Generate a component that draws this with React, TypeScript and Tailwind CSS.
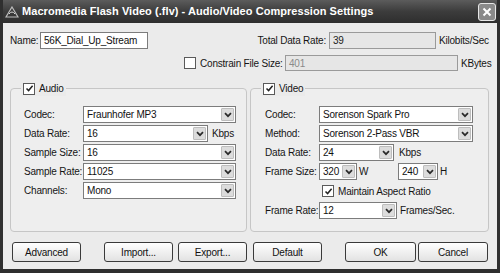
import React from "react";

const font = { fontFamily: '"Liberation Sans", Arial, sans-serif' };

function Chevron() {
  return (
    <svg width="8" height="6" viewBox="0 0 8 6">
      <path d="M1 1.2 L4 4.2 L7 1.2" fill="none" stroke="#2a2a2a" strokeWidth="1.7" />
    </svg>
  );
}

function Check() {
  return (
    <svg width="9" height="9" viewBox="0 0 9 9">
      <path d="M1.5 4.5 L3.6 6.6 L7.6 1.8" fill="none" stroke="#222" strokeWidth="1.5" />
    </svg>
  );
}

function CheckBox({ checked }: { checked: boolean }) {
  return (
    <span className="flex h-[12px] w-[12px] shrink-0 items-center justify-center border border-[#5a5a5a] bg-white">
      {checked ? <Check /> : null}
    </span>
  );
}

function Select({ value, className }: { value: string; className: string }) {
  return (
    <div className={"flex h-[17px] shrink-0 items-center border border-[#7c7c7c] bg-white pl-[3px] pr-[1px] " + className}>
      <span className="flex-1 truncate leading-none text-[#111]">{value}</span>
      <span className="flex h-[13px] w-[13px] items-center justify-center rounded-[1px] border border-[#bdbdbd] bg-[#dcdcdc]">
        <Chevron />
      </span>
    </div>
  );
}

function Btn({ label, className }: { label: string; className: string }) {
  return (
    <div
      className={
        "flex h-[20px] shrink-0 items-center justify-center rounded-[3px] border border-[#3a3a3a] bg-gradient-to-b from-white to-[#e2e2e2] text-[#111] " +
        className
      }
    >
      {label}
    </div>
  );
}

function Row({ label, labelW, children }: { label: string; labelW: string; children: React.ReactNode }) {
  return (
    <div className="flex h-[17px] items-center">
      <span className={"shrink-0 " + labelW}>{label}</span>
      {children}
    </div>
  );
}

export default function App() {
  return (
    <div
      className="flex h-[273px] w-[500px] flex-col border-x-[3px] border-b-[4px] border-[#2f2f2f] bg-[#2f2f2f] text-[10px] tracking-[-0.2px] text-[#151515]"
      style={font}
    >
      {/* Title bar */}
      <div className="relative flex h-[23px] shrink-0 items-center bg-gradient-to-b from-[#5c5c5c] via-[#3c3c3c] to-[#2e2e2e] pl-[2px]">
        <svg width="14" height="12" viewBox="0 0 14 12" className="mr-[3px]">
          <path d="M7 1 L13 11 L1 11 Z" fill="none" stroke="#bdbdbd" strokeWidth="1.2" />
          <path d="M4 8 Q7 4 10 8" fill="none" stroke="#d8d8d8" strokeWidth="1" />
        </svg>
        <span className="text-[11px] font-bold tracking-[0.05px] text-white">
          Macromedia Flash Video (.flv) - Audio/Video Compression Settings
        </span>
        <div className="absolute right-[1px] top-[3px] flex h-[18px] w-[18px] items-center justify-center rounded-[3px] border border-[#e6e6e6] bg-[#8a8a8a]">
          <svg width="10" height="10" viewBox="0 0 10 10">
            <path d="M1.5 1.5 L8.5 8.5 M8.5 1.5 L1.5 8.5" stroke="white" strokeWidth="2" />
          </svg>
        </div>
      </div>

      {/* Body */}
      <div className="flex flex-1 flex-col bg-[#ebebeb] pt-[9px]">
        {/* Row 1 */}
        <div className="flex h-[17px] items-center">
          <span className="ml-[7px] w-[30px] shrink-0">Name:</span>
          <div className="flex h-[17px] w-[108px] shrink-0 items-center border border-[#7c7c7c] bg-white pl-[3px] text-[#111]">
            56K_Dial_Up_Stream
          </div>
          <span className="w-[181px] shrink-0 pr-[3px] text-right">Total Data Rate:</span>
          <div className="flex h-[17px] w-[107px] shrink-0 items-center border border-[#9a9a9a] bg-[#e6e6e6] pl-[3px] text-[#222]">
            39
          </div>
          <span className="ml-[3px]">Kilobits/Sec</span>
        </div>

        {/* Row 2 */}
        <div className="mt-[6px] flex h-[16px] items-center">
          <span className="ml-[181px]">
            <CheckBox checked={false} />
          </span>
          <span className="ml-[4px] w-[85px] shrink-0">Constrain File Size:</span>
          <div className="flex h-[16px] w-[173px] shrink-0 items-center border border-[#9a9a9a] bg-[#e6e6e6] pl-[3px] text-[#8a8a8a]">
            401
          </div>
          <span className="ml-[3px]">KBytes</span>
        </div>

        {/* Groups */}
        <div className="mt-[17px] flex h-[144px] shrink-0">
          {/* Audio */}
          <div className="relative ml-[7px] flex w-[237px] flex-col gap-[2px] rounded-[4px] border border-[#c6c6c6] bg-[#eeeeee] pl-[13px] pt-[17px]">
            <div className="absolute left-[10px] top-[-8px] flex items-center gap-[4px] bg-[#ebebeb] px-[2px]">
              <CheckBox checked={true} />
              <span>Audio</span>
            </div>
            <Row label="Codec:" labelW="w-[59px]">
              <Select value="Fraunhofer MP3" className="w-[153px]" />
            </Row>
            <Row label="Data Rate:" labelW="w-[59px]">
              <Select value="16" className="w-[125px]" />
              <span className="ml-[4px]">Kbps</span>
            </Row>
            <Row label="Sample Size:" labelW="w-[59px]">
              <Select value="16" className="w-[153px]" />
            </Row>
            <Row label="Sample Rate:" labelW="w-[59px]">
              <Select value="11025" className="w-[153px]" />
            </Row>
            <Row label="Channels:" labelW="w-[59px]">
              <Select value="Mono" className="w-[153px]" />
            </Row>
          </div>

          {/* Video */}
          <div className="relative ml-[3px] flex w-[239px] flex-col gap-[2px] rounded-[4px] border border-[#c6c6c6] bg-[#eeeeee] pl-[14px] pt-[17px]">
            <div className="absolute left-[10px] top-[-8px] flex items-center gap-[4px] bg-[#ebebeb] px-[2px]">
              <CheckBox checked={true} />
              <span>Video</span>
            </div>
            <Row label="Codec:" labelW="w-[54px]">
              <Select value="Sorenson Spark Pro" className="w-[154px]" />
            </Row>
            <Row label="Method:" labelW="w-[54px]">
              <Select value="Sorenson 2-Pass VBR" className="w-[154px]" />
            </Row>
            <Row label="Data Rate:" labelW="w-[54px]">
              <Select value="24" className="w-[75px]" />
              <span className="ml-[5px]">Kbps</span>
            </Row>
            <Row label="Frame Size:" labelW="w-[54px]">
              <Select value="320" className="w-[38px]" />
              <span className="ml-[2px] w-[39px]">W</span>
              <Select value="240" className="w-[40px]" />
              <span className="ml-[2px]">H</span>
            </Row>
            <div className="flex h-[18px] items-center pl-[57px]">
              <CheckBox checked={true} />
              <span className="ml-[4px]">Maintain Aspect Ratio</span>
            </div>
            <Row label="Frame Rate:" labelW="w-[54px]">
              <Select value="12" className="w-[78px]" />
              <span className="ml-[3px]">Frames/Sec.</span>
            </Row>
          </div>
        </div>

        {/* Buttons */}
        <div className="mt-[10px] flex">
          <Btn label="Advanced" className="ml-[9px] w-[69px]" />
          <Btn label="Import..." className="ml-[23px] w-[69px]" />
          <Btn label="Export..." className="ml-[5px] w-[69px]" />
          <Btn label="Default" className="ml-[6px] w-[69px]" />
          <Btn label="OK" className="ml-[23px] w-[71px]" />
          <Btn label="Cancel" className="ml-[2px] w-[70px]" />
        </div>
      </div>
    </div>
  );
}
